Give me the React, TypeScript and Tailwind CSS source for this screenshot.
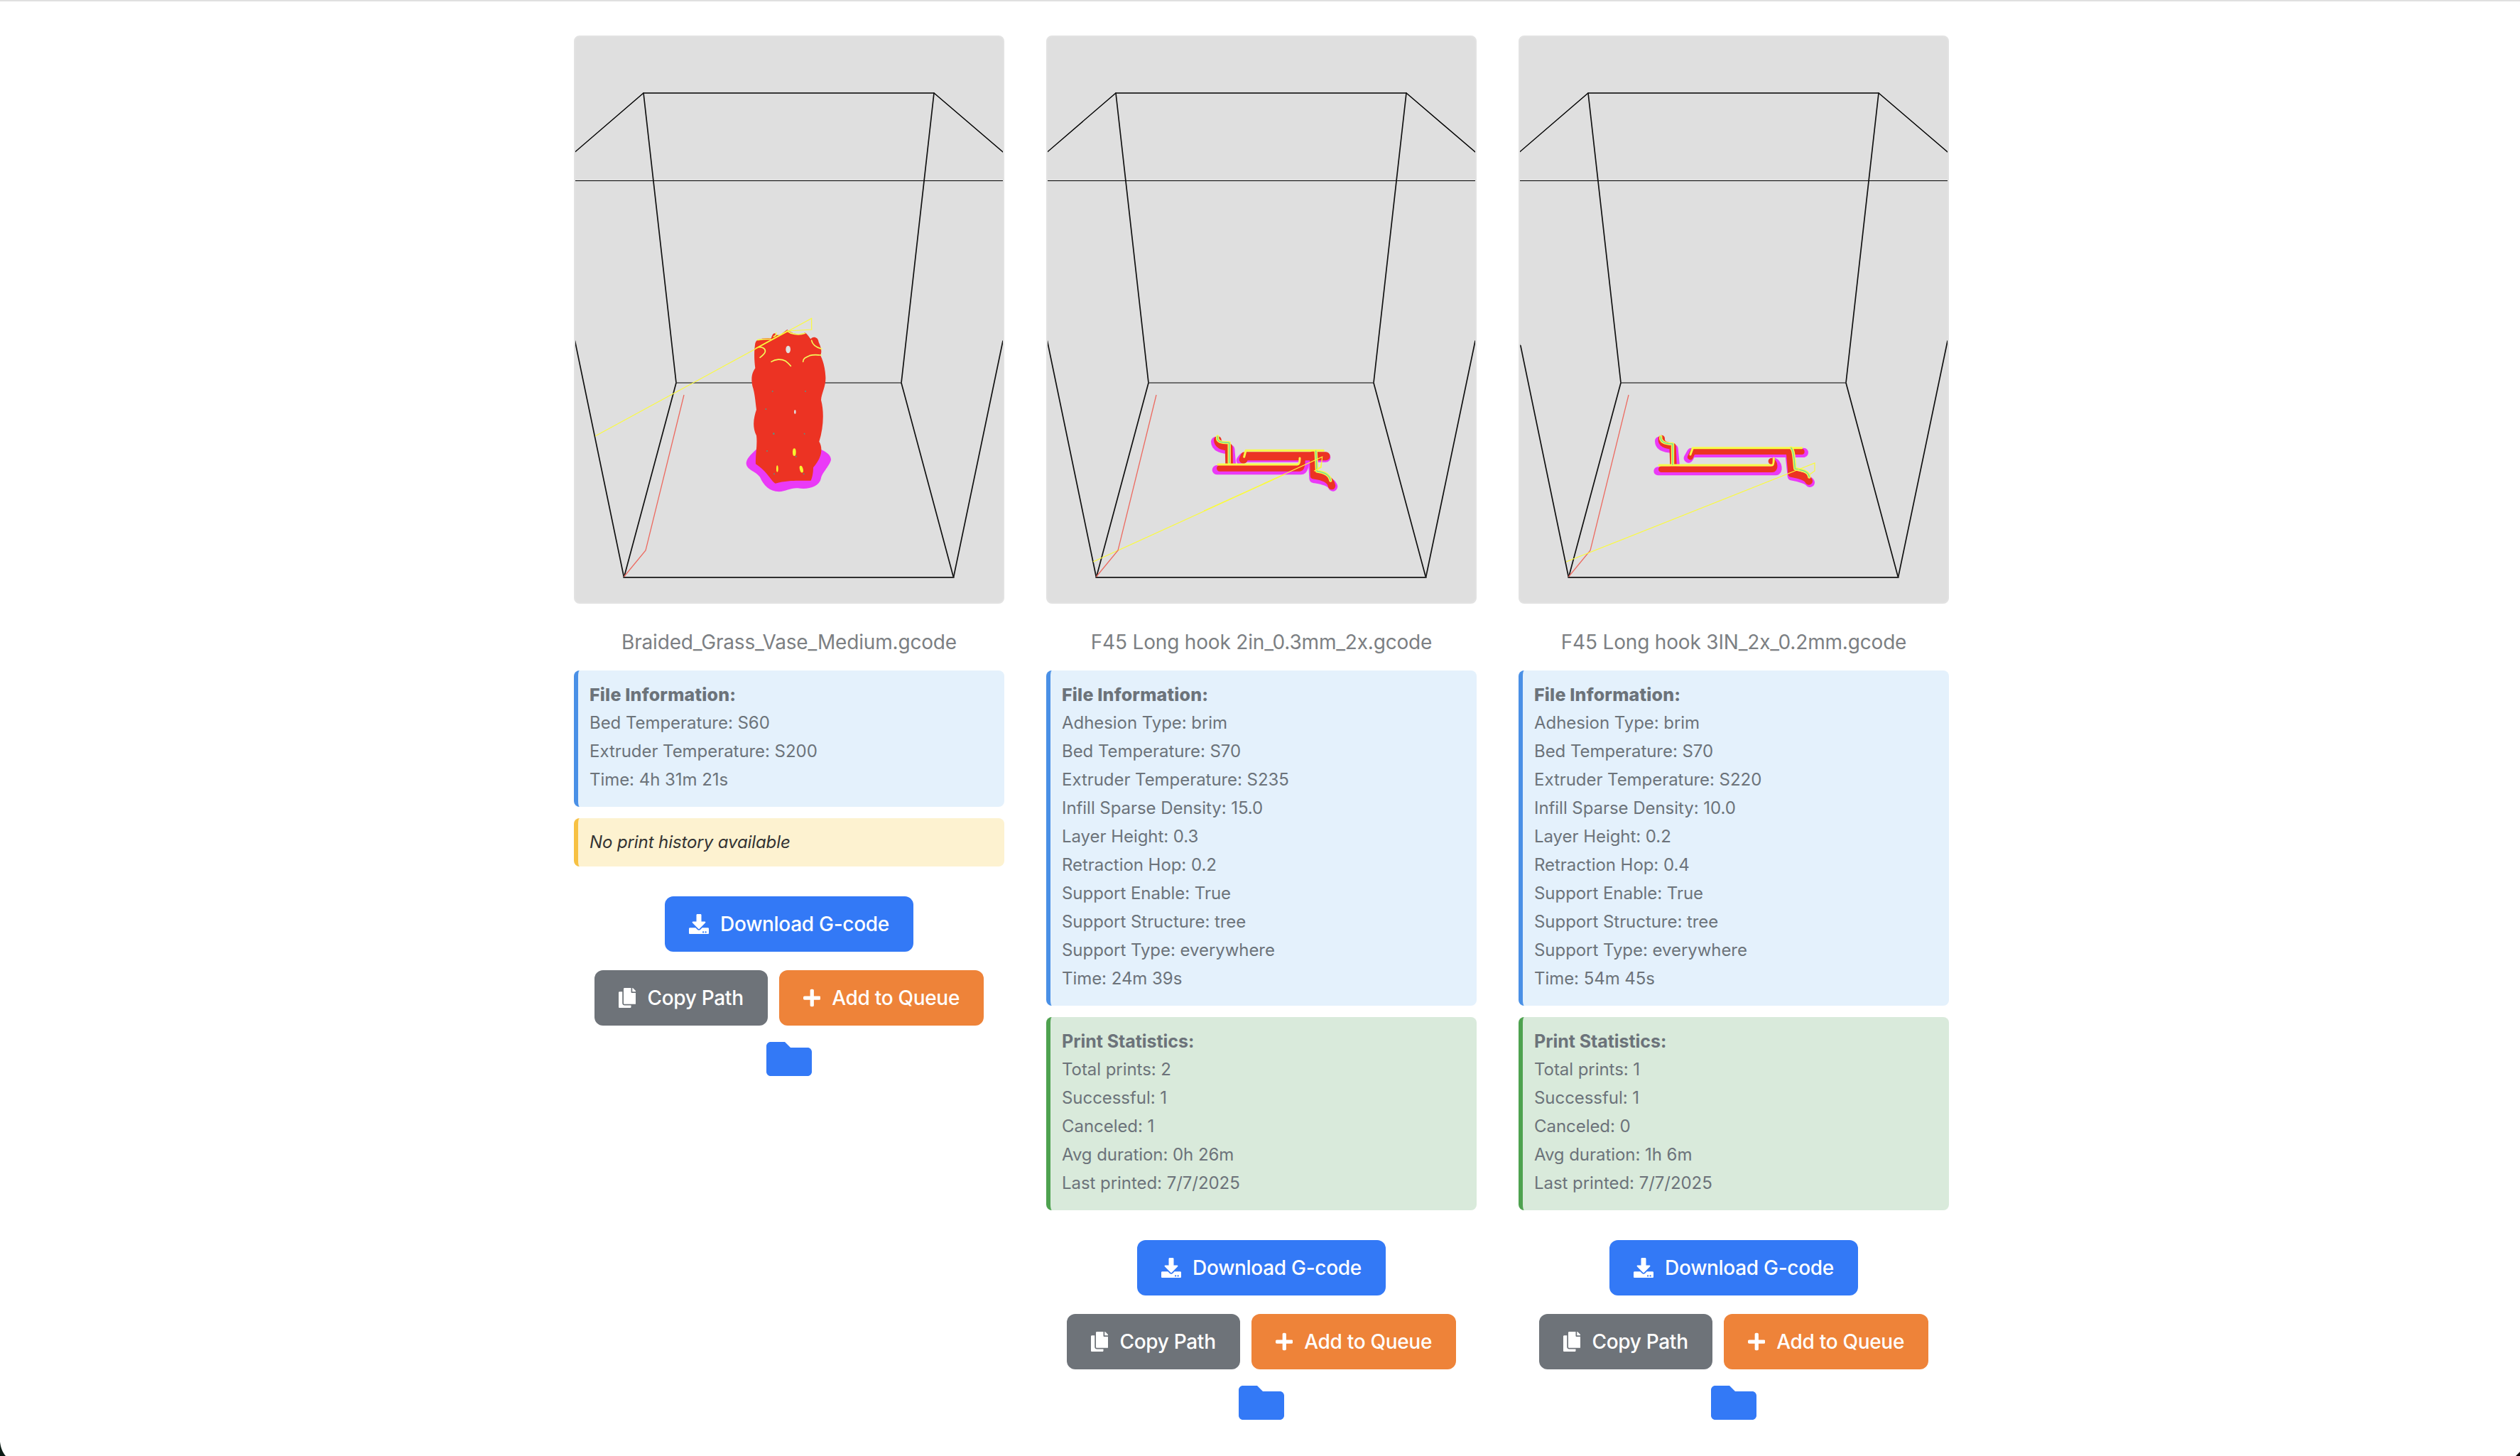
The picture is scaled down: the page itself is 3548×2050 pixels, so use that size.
import { FaCopy, FaDownload, FaFolder, FaPlus } from "react-icons/fa";

interface PrintFile {
  name: string;
  info: string[];
  stats?: string[];
  model: "vase" | "hook2" | "hook3";
}

const files: PrintFile[] = [
  {
    name: "Braided_Grass_Vase_Medium.gcode",
    info: ["Bed Temperature: S60", "Extruder Temperature: S200", "Time: 4h 31m 21s"],
    model: "vase",
  },
  {
    name: "F45 Long hook 2in_0.3mm_2x.gcode",
    info: [
      "Adhesion Type: brim",
      "Bed Temperature: S70",
      "Extruder Temperature: S235",
      "Infill Sparse Density: 15.0",
      "Layer Height: 0.3",
      "Retraction Hop: 0.2",
      "Support Enable: True",
      "Support Structure: tree",
      "Support Type: everywhere",
      "Time: 24m 39s",
    ],
    stats: ["Total prints: 2", "Successful: 1", "Canceled: 1", "Avg duration: 0h 26m", "Last printed: 7/7/2025"],
    model: "hook2",
  },
  {
    name: "F45 Long hook 3IN_2x_0.2mm.gcode",
    info: [
      "Adhesion Type: brim",
      "Bed Temperature: S70",
      "Extruder Temperature: S220",
      "Infill Sparse Density: 10.0",
      "Layer Height: 0.2",
      "Retraction Hop: 0.4",
      "Support Enable: True",
      "Support Structure: tree",
      "Support Type: everywhere",
      "Time: 54m 45s",
    ],
    stats: ["Total prints: 1", "Successful: 1", "Canceled: 0", "Avg duration: 1h 6m", "Last printed: 7/7/2025"],
    model: "hook3",
  },
];

// build volume wireframe, same for every preview
const BuildBox = () => (
  <g fill="none" strokeLinecap="round">
    <path d="M1.5 164L98 81H507L604 164" stroke="#000" strokeWidth="1.4" />
    <path d="M1.5 204.5H604" stroke="#000" strokeWidth="1" />
    <path d="M98 81L144 489M507 81L461 489" stroke="#111" strokeWidth="1.7" />
    <path d="M144 489H461" stroke="#6f6f6f" strokeWidth="2" />
    <path d="M144 489L70.5 763M461 489L534.5 763" stroke="#111" strokeWidth="1.7" />
    <path d="M1.5 430L70.5 763M604 430L534.5 763" stroke="#111" strokeWidth="1.7" />
    <path d="M70.5 763H534.5" stroke="#2e2e2e" strokeWidth="2" />
  </g>
);

const RedTrace = () => (
  <path d="M155 506L101 725L70.5 762" fill="none" stroke="#ec6a60" strokeWidth="1.3" />
);

const Vase = () => (
  <g transform="translate(192 390) scale(0.3333)">
    <path
      d="M198 575C170 600 150 620 152 640C155 665 190 670 210 695C225 730 250 755 290 757C320 755 340 740 370 742C410 748 460 740 468 700C470 680 510 640 510 620C508 600 490 590 470 580Z"
      fill="#ea3af7"
    />
    <path
      d="M190 130C195 110 220 108 258 108C262 90 272 80 280 95L295 95L325 72C340 85 370 100 400 85C415 95 420 110 425 112C430 100 455 100 458 125C470 150 472 170 465 180C475 200 485 230 487 270C490 310 470 340 468 370C482 420 478 490 460 545C475 570 475 610 435 655C435 680 430 700 425 710C380 712 340 705 275 722C255 710 240 670 192 640C190 600 200 560 195 520C175 480 185 440 195 410C190 370 188 340 178 310C170 270 180 250 190 235C185 200 185 160 190 130Z"
      fill="#ec3323"
    />
    <g fill="none" stroke="#f4fb5a" strokeWidth="5" strokeLinecap="round">
      <path d="M258 208C275 196 300 195 318 205C328 212 335 220 340 226" />
      <path d="M392 208C392 196 400 190 420 182C440 176 455 180 468 180" />
      <path d="M205 146C222 146 234 152 232 166C228 178 218 184 210 190" />
      <path d="M325 78C340 90 370 98 400 88" />
      <path d="M428 118C430 130 442 145 470 154" />
      <path d="M268 102C276 98 280 92 278 86" />
      <path d="M200 116C220 112 240 112 255 112" />
    </g>
    <ellipse cx="329" cy="156" rx="10" ry="16" fill="#dfdfdf" />
    <ellipse cx="358" cy="420" rx="4" ry="9" fill="#dfdfdf" />
    <ellipse cx="355" cy="590" rx="7" ry="16" fill="#f7f52e" />
    <ellipse cx="283" cy="660" rx="4" ry="14" fill="#f7f52e" />
    <ellipse cx="385" cy="662" rx="7" ry="15" fill="#f7f52e" transform="rotate(-15 385 662)" />
    <g fill="#5f8f80">
      <circle cx="263" cy="333" r="3" />
      <circle cx="402" cy="333" r="3" />
      <circle cx="235" cy="408" r="3" />
      <circle cx="268" cy="512" r="4" />
      <circle cx="398" cy="512" r="3" />
      <circle cx="240" cy="585" r="3" />
      <circle cx="362" cy="608" r="3" />
      <circle cx="270" cy="682" r="3" />
      <circle cx="395" cy="682" r="3" />
    </g>
    <path d="M-486 522L428 25V72L325 78L190 152" fill="none" stroke="#fbfb3c" strokeWidth="3.5" />
  </g>
);

interface HookShape {
  brim: [string, number][];
  wall: [string, number][];
  edge: string[];
  spine: string[];
}

const HOOK2: HookShape = {
  brim: [
    ["M155 125C155 150 185 158 215 158L222 240", 40],
    ["M160 245H515C525 245 530 225 528 205", 40],
    ["M262 205L272 192H620", 40],
    ["M565 190L570 280C600 285 640 290 650 315", 40],
  ],
  wall: [
    ["M163 118C163 140 185 145 205 148H210L212 225", 32],
    ["M172 238H510C515 238 520 225 520 205", 26],
    ["M272 200L278 187H620", 36],
    ["M568 180L570 268C600 272 640 280 645 312", 32],
  ],
  edge: [
    "M165 222H500C508 222 510 205 510 195",
    "M275 190L282 163H610",
  ],
  spine: [
    "M163 103C158 125 175 130 212 130L212 215",
    "M578 165L582 250C610 255 635 262 640 290",
  ],
};

const HOOK3: HookShape = {
  brim: [
    ["M108 122C108 145 130 155 170 155L178 240", 36],
    ["M103 250H600C612 250 612 220 590 210", 36],
    ["M232 195L245 172H718", 40],
    ["M660 175L670 270C700 275 735 285 745 298", 40],
  ],
  wall: [
    ["M118 112C115 135 135 142 165 145L168 225", 28],
    ["M118 242H585C598 242 598 215 582 208", 26],
    ["M240 190L250 168H710", 24],
    ["M660 165L668 260C690 265 730 270 740 292", 32],
  ],
  edge: [
    "M108 225H585C592 225 592 205 592 195",
    "M240 180L250 152H710",
  ],
  spine: [
    "M115 105C112 125 130 135 165 135L165 222",
    "M665 152C678 160 678 210 682 240C710 245 740 250 742 275",
  ],
};

// magenta brim, red walls, yellow and green on the top edge
const Hook = ({ shape }: { shape: HookShape }) => (
  <g fill="none" strokeLinecap="round" strokeLinejoin="round">
    {shape.brim.map(([d, w]) => (
      <path key={d} d={d} stroke="#ea3af7" strokeWidth={w} />
    ))}
    {shape.wall.map(([d, w]) => (
      <path key={d} d={d} stroke="#ec3323" strokeWidth={w} />
    ))}
    {shape.edge.map((d) => (
      <path key={d} d={d} stroke="#f8fb48" strokeWidth="9" />
    ))}
    {shape.spine.map((d) => (
      <path key={d} d={d} stroke="#f8fb48" strokeWidth="13" />
    ))}
    {shape.spine.map((d) => (
      <path key={d} d={d} stroke="#67d6a4" strokeWidth="4" />
    ))}
  </g>
);

const Preview = ({ model }: { model: PrintFile["model"] }) => (
  <div className="h-[800px] overflow-hidden rounded-lg border-2 border-[#e2e2e2] bg-[#dfdfdf]">
    <svg viewBox="2 2 602 796" className="block h-full w-full">
      <BuildBox />
      {model === "vase" && (
        <>
          <RedTrace />
          <Vase />
        </>
      )}
      {model === "hook2" && (
        <>
          <path d="M66 741L388.3 594L386.7 607L378 613" fill="none" stroke="#fbfb3c" strokeWidth="1.2" />
          <RedTrace />
          <g transform="translate(187 530) scale(0.3333)">
            <Hook shape={HOOK2} />
            <path d="M105 418L605 190L600 235L570 250" fill="none" stroke="#fbfb3c" strokeWidth="3.5" />
          </g>
        </>
      )}
      {model === "hook3" && (
        <>
          <path d="M2.5 428L4 436" fill="none" stroke="#dfdfdf" strokeWidth="3" />
          <RedTrace />
          <g transform="translate(162 530) scale(0.3333)">
            <Hook shape={HOOK3} />
          </g>
          <path d="M67 741L417 602V613L410 618" fill="none" stroke="#fbfb3c" strokeWidth="1.2" />
        </>
      )}
    </svg>
  </div>
);

const InfoBox = ({ title, lines, className, titleClass }: { title: string; lines: string[]; className: string; titleClass: string }) => (
  <div className={`rounded-lg border-l-[6px] pb-[18px] pl-4 pr-4 pt-[14px] text-[24px] leading-[40px] tracking-[-0.05px] text-[#6c737a] ${className}`}>
    <div className={`text-[25px] ${titleClass}`}>{title}</div>
    {lines.map((line) => (
      <div key={line}>{line}</div>
    ))}
  </div>
);

const FileCard = ({ file }: { file: PrintFile }) => (
  <div className="flex w-[606px] flex-col">
    <Preview model={file.model} />
    <div className="mb-[20px] mt-[34px] text-center text-[28px] leading-[40px] tracking-[-0.18px] text-[#7c7f83]">{file.name}</div>
    <InfoBox title="File Information:" lines={file.info} className="border-[#4a90e6] bg-[#e4f1fc]" titleClass="font-extrabold tracking-[0.2px]" />
    {file.stats ? (
      <InfoBox title="Print Statistics:" lines={file.stats} className="mt-4 border-[#4ea24f] bg-[#d9eadb]" titleClass="font-bold" />
    ) : (
      <div className="mt-4 rounded-lg border-l-[6px] border-[#f7c143] bg-[#fdf2d0] py-4 pl-4 text-[24px] italic leading-[36px] tracking-[-0.1px] text-[#333333]">
        No print history available
      </div>
    )}
    <div className="mt-[42px] flex justify-center">
      <button className="flex h-[78px] items-center gap-4 rounded-xl bg-[#3379f6] px-[34px] text-[28px] font-medium tracking-[-0.3px] text-white">
        <FaDownload className="h-7 w-7" />
        Download G-code
      </button>
    </div>
    <div className="mt-[26px] flex justify-center gap-4">
      <button className="flex h-[78px] items-center gap-4 rounded-xl bg-[#6e7379] px-[34px] text-[28px] font-medium tracking-[-0.3px] text-white">
        <FaCopy className="h-7 w-[24.5px]" />
        Copy Path
      </button>
      <button className="flex h-[78px] items-center gap-4 rounded-xl bg-[#ee8339] px-[34px] text-[28px] font-medium tracking-[-0.3px] text-white">
        <FaPlus className="h-7 w-[24.5px]" />
        Add to Queue
      </button>
    </div>
    <div className="mt-[15px] flex justify-center text-[#3379f6]">
      <FaFolder className="h-16 w-16" />
    </div>
  </div>
);

export default function App() {
  return (
    <div className="relative h-[2050px] overflow-hidden border-t-2 border-[#e0e0e0] bg-white pl-[808px] pt-[48px] font-['Inter',sans-serif]">
      <div className="flex gap-[59px]">
        {files.map((file) => (
          <FileCard key={file.name} file={file} />
        ))}
      </div>
      {/* window corners of the original capture */}
      <svg className="absolute bottom-0 left-0" width="10" height="22" viewBox="0 0 10 22">
        <path d="M0 2C1 10 3 16 8 22H0Z" fill="#0b1a14" />
      </svg>
      <svg className="absolute bottom-0 right-0" width="6" height="6" viewBox="0 0 6 6">
        <path d="M6 0V6H0Z" fill="#111" />
      </svg>
    </div>
  );
}
